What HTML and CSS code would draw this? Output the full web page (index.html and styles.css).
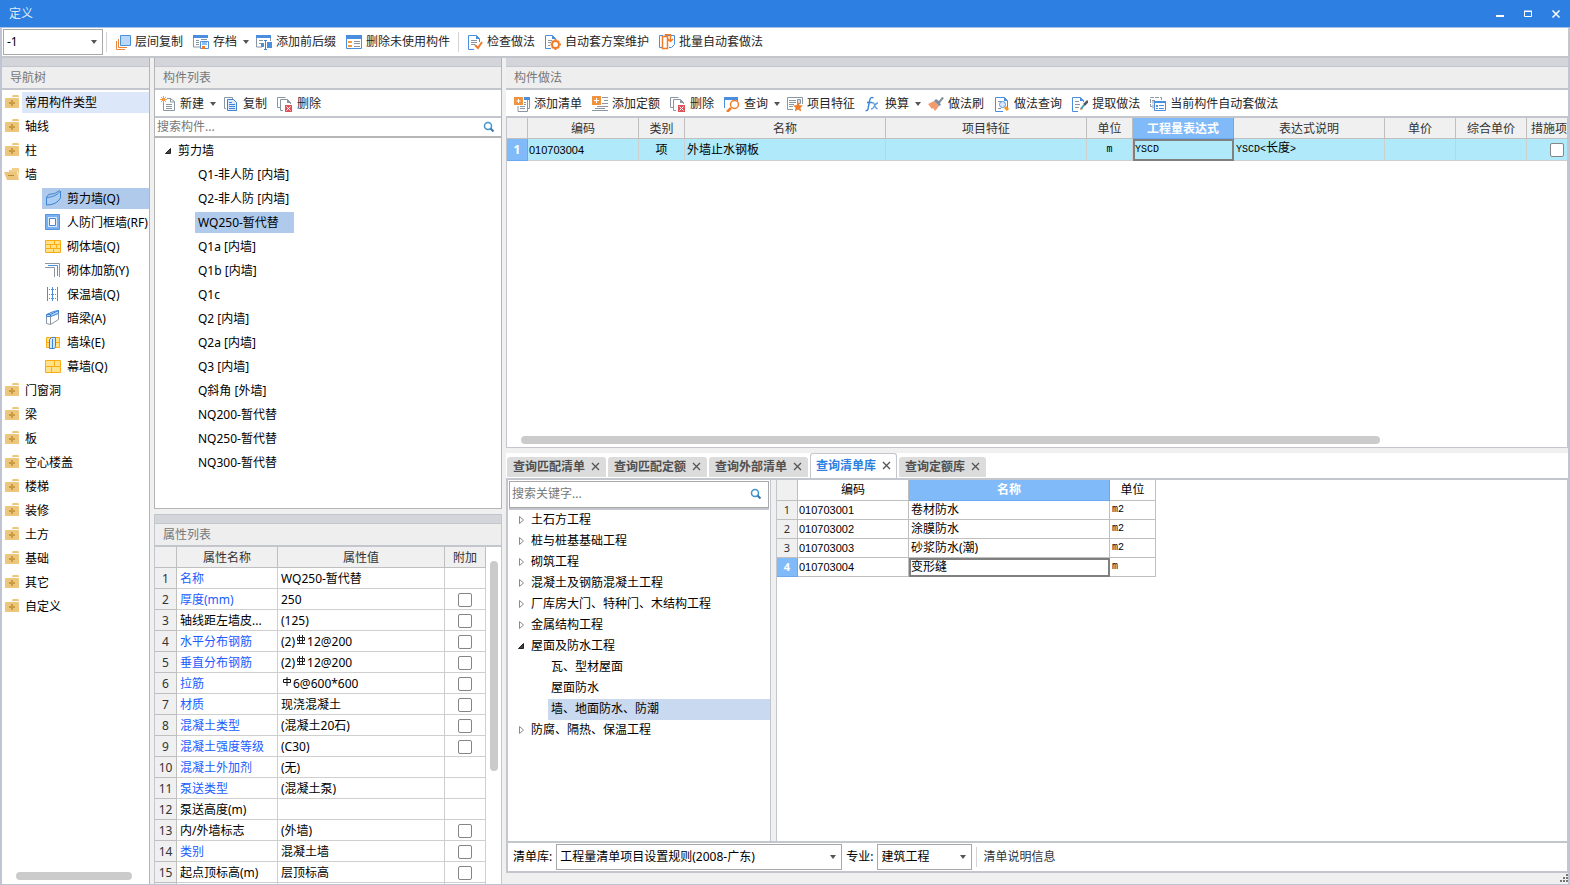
FILE: index.html
```html
<!DOCTYPE html>
<html lang="zh-CN">
<head>
<meta charset="utf-8">
<title>定义</title>
<link rel="stylesheet" href="styles.css">
</head>
<body>
<svg class="defs" aria-hidden="true">
  <symbol id="i-folder" viewBox="0 0 16 16"><path d="M8 3V2l1-1h5l1 1v1z" fill="#edc67d"/><path d="M1 5q0-1 1-1h12q1 0 1 1v9H1z" fill="#edc67d"/><path d="M8 6v6M5 9h6" stroke="#c99a42" stroke-width="2"/></symbol>
  <symbol id="i-folder-open" viewBox="0 0 16 16"><path d="M8 2h7v11l-1-7H5V4h3z" fill="#f3cf8c"/><path d="M0 6h13l2 8H3z" fill="#edc67d"/><path d="M4 9.500h6" stroke="#b98a35" stroke-width="1"/></symbol>
  <symbol id="i-shear" viewBox="0 0 16 16"><path d="M1.500 7.500Q11 7 15.500 1v7q-4 7-14 7z" fill="#a9cdf5" stroke="#3f83d3"/><path d="M1.500 7.500l2-3q7 0 11-4" fill="none" stroke="#3f83d3"/></symbol>
  <symbol id="i-frame" viewBox="0 0 16 16"><path d="M.5.5h14v15H.5z" fill="#79b0f1" stroke="#5795df"/><path d="M3 3h9v10H3z" fill="#d9e9fc"/><path d="M4.500 4.500h6v7h-6z" fill="#fff" stroke="#4685cf"/></symbol>
  <symbol id="i-brick" viewBox="0 0 16 16"><path d="M.5 2.500h15v12H.5zM0 6.500h16M0 10.500h16M9.500 2v4M5.500 6v4M11.500 6v4M8.500 10v4" fill="#ffe18a" stroke="#f9ad13"/></symbol>
  <symbol id="i-bars" viewBox="0 0 16 16"><path d="M0 1.500h14.500V15M0 5.500h9.500V15" fill="none" stroke="#8a97a3"/><path d="M3 3.500h9.500V14" fill="none" stroke="#4a90dc"/></symbol>
  <symbol id="i-insul" viewBox="0 0 16 16"><path d="M2.500 1v14M7.500 1v14M12.500 1v14" stroke="#4a90dc"/><path d="M4 3.500h8M4 8.500h8M4 12.500h8" stroke="#4a90dc" stroke-dasharray="1 1"/></symbol>
  <symbol id="i-beam" viewBox="0 0 16 16"><path d="M1.500 6.500h4v8l-4-1zM5.500 6.500l8-4v7l-8 5" fill="#fff" stroke="#8a97a3"/><path d="M1.500 4.500l7-3 5-1v3l-8 3h-4zM5.500 6V4.500l8-4M1.500 4.500h4" fill="#b8d8fb" stroke="#3f83d3"/></symbol>
  <symbol id="i-pier" viewBox="0 0 16 16"><path d="M1.500 3.500h13v10h-13zM1 8.500h14" fill="#ffe18a" stroke="#f9ad13"/><path d="M4.500 5.500l2-2h4v9l-1 2h-5zM7.500 5v9" fill="#d5e8fd" stroke="#3f83d3"/></symbol>
  <symbol id="i-curtain" viewBox="0 0 16 16"><path d="M.5 2.500h15v12H.5zM0 8.500h16M9.500 2v6M6.500 8v6" fill="#ffe18a" stroke="#f9ad13"/></symbol>
  <symbol id="i-layers" viewBox="0 0 16 16"><path d="M1.500 7v8.500H10M3.500 5v8.500H12" fill="none" stroke="#e8873a"/><path d="M5.500 1.500h10v10h-10z" fill="#b9d8fb" stroke="#4a90dc"/></symbol>
  <symbol id="i-save" viewBox="0 0 16 16"><path d="M.5 1v12H7" fill="none" stroke="#8a97a3"/><path d="M0 1h15v3H0z" fill="#4a8fdf"/><path d="M3 6.500h3M3 8.500h3M3 10.500h3M8 5.500h6" stroke="#8a97a3"/><path d="M7.500 7.500h8v7h-8z" fill="#fff" stroke="#4a90dc"/><path d="M9 8h5v3H9z" fill="#8fbdf2"/><path d="M9 12h3v3H9z" fill="#f07c2a"/></symbol>
  <symbol id="i-affix" viewBox="0 0 16 16"><path d="M.5 1v12H6M14.500 4v3" fill="none" stroke="#8a97a3"/><path d="M0 1h15v3H0z" fill="#4a8fdf"/><path d="M3 6.500h4M3 9.500h3" stroke="#8a97a3"/><path d="M5 9h3v4H5zM11 8h5v6h-5z" fill="#4a90dc"/><path d="M9.500 7v8M8 6.500h3M8 15.500h3" stroke="#3f83d3"/></symbol>
  <symbol id="i-unused" viewBox="0 0 16 16"><path d="M.5 2.500h15v12H.5z" fill="#fff" stroke="#4a8fdf"/><path d="M0 1h16v4H0z" fill="#4a8fdf"/><path d="M2 7h4v2H2zM2 11h4v2H2z" fill="#f39a42"/><path d="M8 7.500h6M8 9.500h6M8 12.500h6" stroke="#8a97a3"/></symbol>
  <symbol id="i-check" viewBox="0 0 16 16"><path d="M7 15.500H1.500v-14h8l3 3V8" fill="#fff" stroke="#4a8fdf"/><path d="M9 1v4h4z" fill="#4a8fdf"/><path d="M4 6.500h6M4 8.500h6M4 10.500h4" stroke="#8a97a3"/><path d="M8 11l3 3 4-6" fill="none" stroke="#f07c2a" stroke-width="2"/></symbol>
  <symbol id="i-gear" viewBox="0 0 16 16"><path d="M6 14.500H.5v-13h7l3 3V6" fill="#fff" stroke="#4a8fdf"/><path d="M7 1v4h4z" fill="#4a8fdf"/><path d="M3 6.500h4M3 8.500h3M3 11.500h2" stroke="#8a97a3"/><circle cx="10.500" cy="10.500" r="3.500" fill="#fff" stroke="#f07c2a" stroke-width="2"/><path d="M10.500 5v2M10.500 14v2M5.500 10.500h1M14.500 10.500H16M7 7l1 1M14 7l-1 1M7 14l1-1M14 14l-1-1" stroke="#f07c2a" stroke-width="2"/></symbol>
  <symbol id="i-batch" viewBox="0 0 16 16"><path d="M4 1.500H.5v12H4M7 1.500h8.500v9l-3 3H10" fill="none" stroke="#4a8fdf"/><path d="M3.500 2.500h5v12h-5zM6.500 2V.5h5V7M9 5l2.500 2.500L14 5" fill="none" stroke="#f07c2a" stroke-width="1.500"/></symbol>
  <symbol id="i-new" viewBox="0 0 16 16"><path d="M3.500 5v9.500h11v-9l-4-3H7" fill="#fff" stroke="#8a97a3"/><path d="M10.500 2v4h4M6 8.500h6M6 10.500h6M6 12.500h6" fill="none" stroke="#8a97a3"/><path d="M1 1l5 5M6 1L1 6M3.500 0v7M0 3.500h7" stroke="#f39a42"/></symbol>
  <symbol id="i-copy" viewBox="0 0 16 16"><path d="M3 12.500H1.500v-11h8V3" fill="none" stroke="#8a97a3"/><path d="M4.500 3.500h6l3 3v8h-9z" fill="#dcebfd" stroke="#3f83d3"/><path d="M6 8.500h6M6 10.500h6M6 12.500h6M6 6.500h3" stroke="#3f83d3"/></symbol>
  <symbol id="i-del" viewBox="0 0 16 16"><path d="M3 11.500H.5v-10h8M6 14.500H3.500v-11h7l3 3V8" fill="none" stroke="#8a97a3"/><path d="M10 3v4h4z" fill="#8a97a3"/><path d="M8 9h7v7H8z" fill="#dd5358"/><path d="M9.500 10.500l4 4M13.500 10.500l-4 4" stroke="#fff"/></symbol>
  <symbol id="i-addlist" viewBox="0 0 16 16"><path d="M10 1.500h5.500v11H14M4 10v5.500h9.500V4" fill="none" stroke="#8a97a3"/><path d="M10 1h6v3h-6z" fill="#4a8fdf"/><path d="M6 10.500h5M6 12.500h5M10 6.500h2M10 8.500h2" stroke="#8a97a3"/><path d="M0 1h9v8H0z" fill="#ee9441"/><path d="M4.500 3v4M2.500 5h4" stroke="#fff"/></symbol>
  <symbol id="i-addquota" viewBox="0 0 16 16"><path d="M10 1.500h6M12 4.500h4M10 7.500h6M5 10.500h11M0 14.500h16M3 12.500h10" stroke="#8a97a3"/><path d="M0 0h9v9H0z" fill="#ee9441"/><path d="M4.500 2v5M2 4.500h5" stroke="#fff"/></symbol>
  <symbol id="i-query" viewBox="0 0 16 16"><path d="M.5 12V2M13.500 2v3" stroke="#4a8fdf"/><path d="M0 1h14v3H0z" fill="#4a8fdf"/><circle cx="10.500" cy="8.500" r="4" fill="#fff" stroke="#f07c2a" stroke-width="1.500"/><path d="M7 12l-4 4" stroke="#f07c2a" stroke-width="2.500"/></symbol>
  <symbol id="i-feature" viewBox="0 0 16 16"><path d="M15.500 8V1.500H.5v12H6" fill="#fff" stroke="#8a97a3"/><path d="M2 4.500h7M2 6.500h7M2 8.500h5M2 10.500h4" stroke="#8a97a3"/><path d="M10.500 3.500h3v4h-3z" fill="#d5dade" stroke="#8a97a3"/><path d="M11 6l1.500 3.200 3.500.3-2.600 2.300.8 3.600-3.200-1.900-3.200 1.900.8-3.600L6 9.500l3.500-.3z" fill="#f07c2a"/></symbol>
  <symbol id="i-fx" viewBox="0 0 16 16"><path d="M8.500 2q-3-2-4 3L3 13q-.5 2-2.500 1.500M2 6.500h5" fill="none" stroke="#3f83d3" stroke-width="1.400"/><path d="M7 7q2-1 2.500 2t3 4M13 7q-2 0-3.500 3T6 13" fill="none" stroke="#5f9de0" stroke-width="1.400"/></symbol>
  <symbol id="i-brush" viewBox="0 0 16 16"><path d="M0 8l6-3 5 5-4 5-2-3-1 1z" fill="#f39b6d"/><path d="M6 5l2-2 3 2 3-4 2 1-4 5 1 2-2 1z" fill="#7f8f9b"/></symbol>
  <symbol id="i-docfind" viewBox="0 0 16 16"><path d="M9 15.500H1.500V1.500h9l3 3V12" fill="#fff" stroke="#4a8fdf"/><path d="M10 1v4h4z" fill="#4a8fdf"/><path d="M4 5.500h4M4 12.500h3" stroke="#8a97a3"/><circle cx="8.500" cy="8.500" r="3" fill="#dbe9fb" stroke="#5795df"/><path d="M11 11l3 3" stroke="#f39a22" stroke-width="3"/></symbol>
  <symbol id="i-extract" viewBox="0 0 16 16"><path d="M6 15.500H.5V1.500h8l3 3V6" fill="#fff" stroke="#4a8fdf"/><path d="M8 1v4h4z" fill="#4a8fdf"/><path d="M3 5.500h4M3 8.500h5M3 11.500h4" stroke="#8a97a3"/><path d="M8 14l1-3 2 2z" fill="#f07c2a"/><path d="M9 13l3-4" stroke="#33aab5" stroke-width="2"/><path d="M12 9l4-4" stroke="#4f5961" stroke-width="2.500"/></symbol>
  <symbol id="i-auto" viewBox="0 0 16 16"><path d="M2 10.500H.5v-9h11V4M2 4.500h3M3 12.500v-8" fill="none" stroke="#8a97a3" stroke-dasharray="4 1"/><path d="M4.500 5.500h11v9h-11z" fill="#fff" stroke="#4a8fdf"/><path d="M4 5h12v2H4z" fill="#4a8fdf"/><path d="M6 9h2v2H6z" fill="#4a8fdf"/><path d="M9 9.500h5M9 12.500h5M6 12.500h2" stroke="#4a8fdf"/></symbol>
  <symbol id="i-search" viewBox="0 0 12 12"><circle cx="5" cy="5" r="3.500" fill="none" stroke="#3f93cf" stroke-width="1.500"/><path d="M7.500 7.500l3 3" stroke="#3577ab" stroke-width="2"/></symbol>
  <symbol id="i-x" viewBox="0 0 9 9"><path d="M1 1l7 7M8 1L1 8" stroke="currentColor" stroke-width="1.300"/></symbol>
  <symbol id="i-open" viewBox="0 0 8 8"><path d="M6.500 1.500v5H1.500z" fill="#444" stroke="#222"/></symbol>
  <symbol id="i-closed" viewBox="0 0 8 8"><path d="M2.500 .5v7L6.500 4z" fill="#fff" stroke="#8a8a8a"/></symbol>
  <symbol id="i-rebar3" viewBox="0 0 10 12"><path d="M1.500 3.500h7v3h-7zM3.500 1v8M6.500 1v8M1 9.500h8" fill="none" stroke="#222"/></symbol>
  <symbol id="i-rebar1" viewBox="0 0 10 12"><path d="M1.500 3.500h7v3h-7zM5 1v9" fill="none" stroke="#111"/></symbol>
</svg>

<div class="window">
  <header class="titlebar">
    <span>定义</span>
    <div class="winbtns">
      <button aria-label="最小化"><svg viewBox="0 0 10 10"><path d="M1 7h8" stroke="#fff" stroke-width="2"/></svg></button>
      <button aria-label="最大化"><svg viewBox="0 0 10 10"><path d="M1.500 2.500h7v5h-7zM1 2h8" fill="none" stroke="#fff"/></svg></button>
      <button aria-label="关闭"><svg viewBox="0 0 10 10"><path d="M1.500 1.500l7 7M8.500 1.500l-7 7" stroke="#fff" stroke-width="1.500"/></svg></button>
    </div>
  </header>

  <div class="toolbar main-toolbar">
    <span class="combo floor"><select aria-label="楼层"><option>-1</option></select></span>
    <i class="sep"></i>
    <button class="tool"><svg><use href="#i-layers"/></svg>层间复制</button>
    <button class="tool drop"><svg><use href="#i-save"/></svg>存档</button>
    <button class="tool"><svg><use href="#i-affix"/></svg>添加前后缀</button>
    <button class="tool"><svg><use href="#i-unused"/></svg>删除未使用构件</button>
    <i class="sep"></i>
    <button class="tool"><svg><use href="#i-check"/></svg>检查做法</button>
    <button class="tool"><svg><use href="#i-gear"/></svg>自动套方案维护</button>
    <button class="tool"><svg><use href="#i-batch"/></svg>批量自动套做法</button>
  </div>

  <main class="docks">
    <section class="dock nav">
      <div class="strip"></div>
      <h2 class="dock-title">导航树</h2>
      <ul class="navtree">
        <li class="hover"><svg><use href="#i-folder"/></svg><span>常用构件类型</span></li>
        <li><svg><use href="#i-folder"/></svg><span>轴线</span></li>
        <li><svg><use href="#i-folder"/></svg><span>柱</span></li>
        <li><svg><use href="#i-folder-open"/></svg><span>墙</span></li>
        <li class="child selected"><div><svg><use href="#i-shear"/></svg>剪力墙(Q)</div></li>
        <li class="child"><div><svg><use href="#i-frame"/></svg>人防门框墙(RF)</div></li>
        <li class="child"><div><svg><use href="#i-brick"/></svg>砌体墙(Q)</div></li>
        <li class="child"><div><svg><use href="#i-bars"/></svg>砌体加筋(Y)</div></li>
        <li class="child"><div><svg><use href="#i-insul"/></svg>保温墙(Q)</div></li>
        <li class="child"><div><svg><use href="#i-beam"/></svg>暗梁(A)</div></li>
        <li class="child"><div><svg><use href="#i-pier"/></svg>墙垛(E)</div></li>
        <li class="child"><div><svg><use href="#i-curtain"/></svg>幕墙(Q)</div></li>
        <li><svg><use href="#i-folder"/></svg><span>门窗洞</span></li>
        <li><svg><use href="#i-folder"/></svg><span>梁</span></li>
        <li><svg><use href="#i-folder"/></svg><span>板</span></li>
        <li><svg><use href="#i-folder"/></svg><span>空心楼盖</span></li>
        <li><svg><use href="#i-folder"/></svg><span>楼梯</span></li>
        <li><svg><use href="#i-folder"/></svg><span>装修</span></li>
        <li><svg><use href="#i-folder"/></svg><span>土方</span></li>
        <li><svg><use href="#i-folder"/></svg><span>基础</span></li>
        <li><svg><use href="#i-folder"/></svg><span>其它</span></li>
        <li><svg><use href="#i-folder"/></svg><span>自定义</span></li>
      </ul>
      <div class="hscroll nav-scroll"></div>
    </section>

    <div class="middle">
      <section class="dock parts">
        <div class="strip"></div>
        <h2 class="dock-title">构件列表</h2>
        <div class="toolbar">
          <button class="tool drop"><svg><use href="#i-new"/></svg>新建</button>
          <button class="tool"><svg><use href="#i-copy"/></svg>复制</button>
          <button class="tool"><svg><use href="#i-del"/></svg>删除</button>
        </div>
        <label class="search"><input type="text" placeholder="搜索构件..." aria-label="搜索构件"><svg><use href="#i-search"/></svg></label>
        <ul class="parttree">
          <li class="root"><svg><use href="#i-open"/></svg>剪力墙</li>
          <li><span>Q1-非人防 [内墙]</span></li>
          <li><span>Q2-非人防 [内墙]</span></li>
          <li class="selected"><span>WQ250-暂代替</span></li>
          <li><span>Q1a [内墙]</span></li>
          <li><span>Q1b [内墙]</span></li>
          <li><span>Q1c</span></li>
          <li><span>Q2 [内墙]</span></li>
          <li><span>Q2a [内墙]</span></li>
          <li><span>Q3 [内墙]</span></li>
          <li><span>Q斜角 [外墙]</span></li>
          <li><span>NQ200-暂代替</span></li>
          <li><span>NQ250-暂代替</span></li>
          <li><span>NQ300-暂代替</span></li>
        </ul>
      </section>

      <section class="dock props">
        <div class="strip"></div>
        <h2 class="dock-title">属性列表</h2>
        <div class="props-body">
          <table class="grid">
            <colgroup><col class="w22"><col class="w101"><col class="w167"><col class="w41"></colgroup>
            <thead><tr><th></th><th>属性名称</th><th>属性值</th><th>附加</th></tr></thead>
            <tbody>
              <tr><th>1</th><td class="blue">名称</td><td>WQ250-暂代替</td><td></td></tr>
              <tr><th>2</th><td class="blue">厚度(mm)</td><td>250</td><td><input type="checkbox" aria-label="附加 厚度"></td></tr>
              <tr><th>3</th><td>轴线距左墙皮...</td><td>(125)</td><td><input type="checkbox" aria-label="附加 轴线距左墙皮"></td></tr>
              <tr><th>4</th><td class="blue">水平分布钢筋</td><td>(2)<svg><use href="#i-rebar3"/></svg>12@200</td><td><input type="checkbox" aria-label="附加 水平分布钢筋"></td></tr>
              <tr><th>5</th><td class="blue">垂直分布钢筋</td><td>(2)<svg><use href="#i-rebar3"/></svg>12@200</td><td><input type="checkbox" aria-label="附加 垂直分布钢筋"></td></tr>
              <tr><th>6</th><td class="blue">拉筋</td><td><svg><use href="#i-rebar1"/></svg>6@600*600</td><td><input type="checkbox" aria-label="附加 拉筋"></td></tr>
              <tr><th>7</th><td class="blue">材质</td><td>现浇混凝土</td><td><input type="checkbox" aria-label="附加 材质"></td></tr>
              <tr><th>8</th><td class="blue">混凝土类型</td><td>(混凝土20石)</td><td><input type="checkbox" aria-label="附加 混凝土类型"></td></tr>
              <tr><th>9</th><td class="blue">混凝土强度等级</td><td>(C30)</td><td><input type="checkbox" aria-label="附加 混凝土强度等级"></td></tr>
              <tr><th>10</th><td class="blue">混凝土外加剂</td><td>(无)</td><td></td></tr>
              <tr><th>11</th><td class="blue">泵送类型</td><td>(混凝土泵)</td><td></td></tr>
              <tr><th>12</th><td>泵送高度(m)</td><td></td><td></td></tr>
              <tr><th>13</th><td>内/外墙标志</td><td>(外墙)</td><td><input type="checkbox" aria-label="附加 内/外墙标志"></td></tr>
              <tr><th>14</th><td class="blue">类别</td><td>混凝土墙</td><td><input type="checkbox" aria-label="附加 类别"></td></tr>
              <tr><th>15</th><td>起点顶标高(m)</td><td>层顶标高</td><td><input type="checkbox" aria-label="附加 起点顶标高"></td></tr>
              <tr><th></th><td></td><td></td><td></td></tr>
            </tbody>
          </table>
          <div class="vscroll"></div>
        </div>
      </section>
    </div>

    <section class="dock methods">
      <div class="strip"></div>
      <h2 class="dock-title">构件做法</h2>
      <div class="toolbar">
        <button class="tool"><svg><use href="#i-addlist"/></svg>添加清单</button>
        <button class="tool"><svg><use href="#i-addquota"/></svg>添加定额</button>
        <button class="tool"><svg><use href="#i-del"/></svg>删除</button>
        <button class="tool drop"><svg><use href="#i-query"/></svg>查询</button>
        <button class="tool"><svg><use href="#i-feature"/></svg>项目特征</button>
        <button class="tool drop"><svg><use href="#i-fx"/></svg>换算</button>
        <button class="tool"><svg><use href="#i-brush"/></svg>做法刷</button>
        <button class="tool"><svg><use href="#i-docfind"/></svg>做法查询</button>
        <button class="tool"><svg><use href="#i-extract"/></svg>提取做法</button>
        <button class="tool"><svg><use href="#i-auto"/></svg>当前构件自动套做法</button>
      </div>
      <div class="bill">
        <table class="grid billgrid">
          <colgroup><col class="w21"><col class="w111"><col class="w46"><col class="w201"><col class="w201"><col class="w46"><col class="w101"><col class="w151"><col class="w71"><col class="w71"><col class="w61"></colgroup>
          <thead><tr><th></th><th>编码</th><th>类别</th><th>名称</th><th>项目特征</th><th>单位</th><th class="current">工程量表达式</th><th>表达式说明</th><th>单价</th><th>综合单价</th><th class="start">措施项</th></tr></thead>
          <tbody><tr><th class="current">1</th><td class="code">010703004</td><td class="center">项</td><td>外墙止水钢板</td><td></td><td class="center mono">m</td><td class="mono focus">YSCD</td><td class="mono">YSCD&lt;<span>长度</span>&gt;</td><td></td><td></td><td class="center"><input type="checkbox" aria-label="措施项目"></td></tr></tbody>
        </table>
        <div class="hscroll bill-scroll"></div>
      </div>

      <nav class="tabs">
        <button>查询匹配清单<svg><use href="#i-x"/></svg></button>
        <button>查询匹配定额<svg><use href="#i-x"/></svg></button>
        <button>查询外部清单<svg><use href="#i-x"/></svg></button>
        <button class="active">查询清单库<svg><use href="#i-x"/></svg></button>
        <button>查询定额库<svg><use href="#i-x"/></svg></button>
      </nav>

      <div class="library">
        <div class="chapters">
          <label class="search boxed"><input type="text" placeholder="搜索关键字..." aria-label="搜索关键字"><svg><use href="#i-search"/></svg></label>
          <ul class="chaptertree">
            <li><svg><use href="#i-closed"/></svg>土石方工程</li>
            <li><svg><use href="#i-closed"/></svg>桩与桩基基础工程</li>
            <li><svg><use href="#i-closed"/></svg>砌筑工程</li>
            <li><svg><use href="#i-closed"/></svg>混凝土及钢筋混凝土工程</li>
            <li><svg><use href="#i-closed"/></svg>厂库房大门、特种门、木结构工程</li>
            <li><svg><use href="#i-closed"/></svg>金属结构工程</li>
            <li><svg><use href="#i-open"/></svg>屋面及防水工程</li>
            <li class="leaf">瓦、型材屋面</li>
            <li class="leaf">屋面防水</li>
            <li class="leaf selected">墙、地面防水、防潮</li>
            <li><svg><use href="#i-closed"/></svg>防腐、隔热、保温工程</li>
          </ul>
        </div>
        <div class="items">
          <table class="grid itemgrid">
            <colgroup><col class="w21"><col class="w111"><col class="w201"><col class="w46"></colgroup>
            <thead><tr><th></th><th>编码</th><th class="current">名称</th><th>单位</th></tr></thead>
            <tbody>
              <tr><th>1</th><td class="code">010703001</td><td>卷材防水</td><td class="mono">m2</td></tr>
              <tr><th>2</th><td class="code">010703002</td><td>涂膜防水</td><td class="mono">m2</td></tr>
              <tr><th>3</th><td class="code">010703003</td><td>砂浆防水(潮)</td><td class="mono">m2</td></tr>
              <tr><th class="current">4</th><td class="code">010703004</td><td class="focus">变形缝</td><td class="mono">m</td></tr>
            </tbody>
          </table>
        </div>
      </div>

      <div class="libbar">
        <label for="lib">清单库:</label>
        <span class="combo lib"><select id="lib"><option>工程量清单项目设置规则(2008-广东)</option></select></span>
        <label for="major">专业:</label>
        <span class="combo major"><select id="major"><option>建筑工程</option></select></span>
        <i class="sep"></i>
        <button class="info">清单说明信息</button>
      </div>
      <div class="footer"><svg viewBox="0 0 10 10"><path d="M8 1h2M5 4h2M8 4h2M2 7h2M5 7h2M8 7h2" stroke="#777" stroke-width="2"/></svg></div>
    </section>
  </main>
</div>
</body>
</html>
```
FILE: styles.css
```css
* { box-sizing: border-box; }
body, h2, ul { margin: 0; padding: 0; }
body {
  font: 12px/18px "Noto Sans", "Noto Sans CJK SC", sans-serif;
  color: #000;
  background: #f0f0f0;
}
button, input, select { font: inherit; color: inherit; margin: 0; }
button { border: 0; background: none; padding: 0; white-space: nowrap; }
ul { list-style: none; white-space: nowrap; }
svg { flex: none; }
.defs { position: absolute; width: 0; height: 0; }

.window { display: flex; flex-direction: column; height: 100vh; overflow: hidden; }

/* title bar */
.titlebar {
  display: flex; align-items: center; justify-content: space-between;
  flex: none; height: 28px; padding: 0 9px;
  color: #dfeaf8; background: #2d7fe1; border-bottom: 1px solid #a9c0de;
}
.winbtns { display: flex; gap: 18px; }
.winbtns button { width: 10px; height: 10px; }
.winbtns svg { display: block; width: 10px; height: 10px; }

/* toolbars */
.toolbar {
  display: flex; align-items: center; flex: none;
  height: 28px; padding-top: 2px; background: #fff; border-bottom: 2px solid #c3c6cc; overflow: hidden;
}
.methods .toolbar { padding-left: 3px; }
.tool { display: flex; align-items: center; gap: 4px; height: 20px; padding: 0 5px; color: #262626; }
.tool svg { width: 16px; height: 16px; }
.tool.drop { padding-right: 2px; }
.drop::after { content: ""; border: 3px solid transparent; border-top: 4px solid #555; border-bottom: 0; margin-left: 2px; }
.main-toolbar {
  height: 30px; padding-top: 0; padding-left: 1px;
  border-left: 2px solid #bfc5d2; border-right: 2px solid #c3c6cc;
}
.sep { width: 1px; height: 20px; margin: 0 3px; background: #d4d4d4; }
.combo { position: relative; display: block; height: 26px; background: #fff; border: 1px solid #a8a8a8; }
.combo select {
  display: block; width: 100%; height: 24px; padding: 0 16px 0 3px;
  appearance: none; border: 0; background: none;
}
.combo::after {
  content: ""; position: absolute; right: 5px; top: 10px;
  border: 3px solid transparent; border-top: 4px solid #555; border-bottom: 0;
  pointer-events: none;
}
.floor { width: 100px; }

/* docked panels */
.docks {
  display: grid; grid-template-columns: 148px 348px minmax(0, 1fr); gap: 4px;
  flex: 1; min-height: 0;
  border: 2px solid #bfc5d2; border-top: 0; border-bottom-width: 1px;
}
.dock { display: flex; flex-direction: column; min-width: 0; min-height: 0; }
.strip { flex: none; height: 9px; background: #d4d5db; border-bottom: 1px solid #c3c6cc; }
.dock-title {
  flex: none; height: 23px; padding-left: 8px;
  font-size: 12px; font-weight: 400; line-height: 22px; color: #777;
  background: #eee; border-bottom: 2px solid #c3c6cc;
}
.nav { background: #fff; border-right: 1px solid #b5b5b5; }
.hscroll { height: 8px; border-radius: 4px; background: #cbcbcb; }
.nav-scroll { margin: auto 17px 4px 14px; }

.navtree li { display: flex; align-items: center; height: 24px; padding-left: 2px; }
.navtree svg { width: 16px; height: 16px; }
.navtree span { flex: 1; height: 21px; line-height: 21px; margin-left: 2px; padding-left: 3px; }
.navtree .hover span { background: #dce8f9; }
.navtree .child { padding-left: 40px; }
.navtree .child div { display: flex; align-items: center; gap: 6px; flex: 1; min-width: 0; height: 21px; line-height: 21px; padding-left: 3px; }
.navtree .selected div { background: #b0caec; }

.middle { display: flex; flex-direction: column; gap: 5px; min-height: 0; }
.parts { flex: 452 1 0; background: #fff; border: 1px solid #b5b5b5; border-top: 0; }
.props { flex: 370 1 0; background: #fff; border: 1px solid #c3c6cc; border-bottom: 0; }
.search { display: flex; align-items: center; flex: none; height: 20px; padding-right: 6px; border-bottom: 2px solid #b5b5b5; }
.search input { flex: 1; min-width: 0; height: 18px; padding: 0 2px; border: 0; outline: 0; background: none; }
.search input::placeholder { color: #777; opacity: 1; }
.search svg { width: 12px; height: 12px; }
.parttree li { display: flex; align-items: center; height: 24px; padding-left: 40px; }
.parttree .root { padding: 2px 0 0 9px; gap: 6px; }
.parttree svg, .chaptertree svg { width: 8px; height: 8px; }
.parttree span { height: 21px; line-height: 21px; padding: 0 15px 0 3px; }
.parttree .selected span { background: #b0caec; }

/* tables */
.grid { flex: none; table-layout: fixed; border-collapse: separate; border-spacing: 0; }
.grid th, .grid td {
  height: 21px; padding: 0; line-height: 18px; font-weight: 400;
  border-right: 1px solid #cfcfcf; border-bottom: 1px solid #cfcfcf;
  white-space: nowrap; overflow: hidden;
}
.grid th { color: #333; background: #f0f0f0; border-color: #bfbfbf; text-align: center; }
.grid td { padding-left: 3px; }
.w21 { width: 21px; } .w22 { width: 22px; } .w41 { width: 41px; } .w46 { width: 46px; }
.w61 { width: 61px; } .w71 { width: 71px; } .w101 { width: 101px; } .w111 { width: 111px; }
.w151 { width: 151px; } .w167 { width: 167px; } .w201 { width: 201px; }
.grid input {
  appearance: none; display: block; width: 14px; height: 14px; margin: 0 auto;
  border: 1px solid #858585; border-radius: 2px; background: #fff;
}
.grid .current { color: #fff; background: #80baf9; border-color: #6aa9ef; font-weight: 700; }
.grid .focus { border: 2px solid #808080; padding-left: 0; line-height: 16px; }
.grid .center { text-align: center; padding: 0; }
.grid .start { text-align: left; padding-left: 4px; }
.grid .code { font-family: "Liberation Sans", sans-serif; font-size: 11px; padding-left: 1px; }
.grid .mono { font-family: "Liberation Mono", "Noto Sans CJK SC", monospace; font-size: 10px; }
.grid .mono span { font-size: 12px; }

.props-body { display: flex; flex: 1; min-height: 0; overflow: hidden; }
.props-body .grid { width: 331px; align-self: flex-start; }
.props-body th, .props-body td { padding-top: 1px; }
.props-body .blue { color: #1a5cff; }
.props-body td:last-child { padding-left: 0; }
.props-body td svg { width: 10px; height: 12px; margin: 0 1px; }
.vscroll { width: 8px; height: 210px; margin: 14px 0 0 4px; border-radius: 4px; background: #cbcbcb; }

/* construction methods */
.bill {
  display: flex; flex-direction: column; flex: 329 1 0; min-height: 0; overflow: hidden;
  background: #fff; border: 1px solid #c3c6cc; border-top: 0;
}
.billgrid { width: 1081px; }
.billgrid thead th { padding-top: 2px; }
.billgrid thead .start { padding-left: 4px; }
.billgrid td { background: #afe9fa; height: 22px; padding-left: 2px; }
.bill-scroll { flex: none; width: 81%; margin: auto 0 3px 14px; }

.tabs {
  display: flex; align-items: flex-end; gap: 2px; flex: none;
  height: 27px; margin-top: 5px; padding-left: 1px;
  background: #fff; border-bottom: 2px solid #c3c6cc;
}
.tabs button {
  display: flex; align-items: center; gap: 6px; height: 20px; margin-bottom: 1px; padding: 0 6px;
  font-weight: 700; color: #505050; background: #dcdcdc; border-radius: 3px 3px 0 0;
}
.tabs svg { width: 9px; height: 9px; color: #555; }
.tabs .active {
  height: 25px; margin-bottom: 0; padding: 0 5px; color: #2d7fe1; background: #fff;
  border: 1px solid #c3c6cc; border-bottom: 0;
}

.library {
  display: grid; grid-template-columns: 265px minmax(0, 1fr); gap: 5px;
  flex: 362 1 0; min-height: 0;
}
.chapters { background: #fff; border-left: 2px solid #c3c6cc; border-right: 1px solid #c3c6cc; }
.boxed { height: 27px; margin: 1px 1px 2px; border: 1px solid #a8a8a8; box-shadow: 0 2px #c3c6cc; }
.chaptertree li { display: flex; align-items: center; gap: 6px; height: 21px; padding-left: 9px; }
.chaptertree .leaf { margin-left: 40px; padding-left: 3px; }
.chaptertree .selected { background: #c9d9f0; }
.items { background: #fff; border-left: 1px solid #c3c6cc; border-right: 1px solid #c3c6cc; overflow: hidden; }
.itemgrid { width: 379px; }
.itemgrid thead th { padding-top: 1px; }
.itemgrid td, .itemgrid tbody th { height: 19px; line-height: 16px; border-color: #bfbfbf; }
.itemgrid td.focus { line-height: 14px; }
.itemgrid thead th:not(.current) { color: #000; background: #fff; }
.itemgrid thead th:first-child { background: #f0f0f0; }
.itemgrid td { padding-left: 2px; }
.itemgrid tbody th { font-size: 11px; }

.libbar {
  display: flex; align-items: center; gap: 4px; flex: none;
  height: 32px; padding-left: 5px; white-space: nowrap;
  background: #fff; border: 2px solid #c3c6cc; border-right-width: 1px;
}
.lib { width: 286px; }
.major { width: 95px; }
.libbar .sep { margin: 0; }
.info { color: #333; padding: 0 2px; }
.footer { display: flex; align-items: flex-end; justify-content: flex-end; flex: none; height: 11px; }
.footer svg { width: 10px; height: 10px; }
```
